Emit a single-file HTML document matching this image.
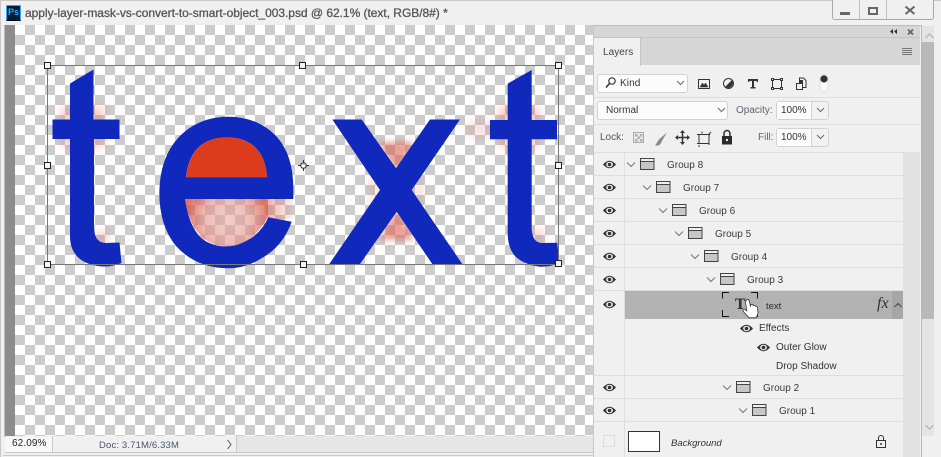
<!DOCTYPE html>
<html><head><meta charset="utf-8">
<style>
html,body{margin:0;padding:0;width:941px;height:457px;overflow:hidden;background:#f0f0f0;font-family:"Liberation Sans",sans-serif;color:#333}
svg{position:absolute;left:0;top:0}
.t{position:absolute;font-size:10px;line-height:12px;white-space:nowrap;color:#3a3a3a;margin-top:1px}
.b{position:absolute;box-sizing:border-box}
</style></head><body>
<div class="b" style="left:0;top:0;width:941px;height:1px;background:#c8c8c8"></div>
<div class="b" style="left:0;top:0;width:1px;height:457px;background:#c8c8c8"></div>
<div class="b" style="left:4px;top:25px;width:1px;height:412px;background:#bdbdbd"></div>
<div class="b" style="left:5px;top:25px;width:10px;height:411px;background:#8c8c8c"></div>
<div class="b" style="left:15px;top:25px;width:578px;height:411px;background-color:#fff;background-image:linear-gradient(45deg,#ccc 25%,transparent 25%,transparent 75%,#ccc 75%),linear-gradient(45deg,#ccc 25%,transparent 25%,transparent 75%,#ccc 75%);background-size:20px 20px;background-position:0 0,10px 10px"></div>
<div class="b" style="left:237px;top:436px;width:356px;height:16px;background:#e6e6e6"></div>

<svg width="941" height="457" viewBox="0 0 941 457">
<defs>
<filter id="bl" x="-60%" y="-60%" width="220%" height="220%"><feGaussianBlur stdDeviation="5"/></filter>
<filter id="bs" x="-60%" y="-60%" width="220%" height="220%"><feGaussianBlur stdDeviation="3"/></filter>
<radialGradient id="rg" gradientUnits="userSpaceOnUse" cx="228" cy="220" r="42">
<stop offset="0" stop-color="#e8a8a0" stop-opacity=".55"/><stop offset=".55" stop-color="#e39088" stop-opacity=".6"/><stop offset="1" stop-color="#d8503c" stop-opacity=".78"/></radialGradient>
<linearGradient id="lg" x1="0" x2="1"><stop offset="0" stop-color="#e06a5a" stop-opacity=".5"/><stop offset="1" stop-color="#e06a5a" stop-opacity=".08"/></linearGradient>
<g id="eye"><path d="M-6.500 0Q0-7.500 6.500 0Q0 7.500-6.500 0Z" fill="#333"/><ellipse cx="0" cy="0" rx="3.400" ry="2.800" fill="#eee"/><circle r="1.800" fill="#333"/></g>
<g id="grp" fill="none"><path d="M0 5.500l4 4 4-4" stroke="#777" stroke-width="1"/>
<path d="M13.500 1.500h13.500v11h-13.500z" fill="#c6c6c6" stroke="#444"/><path d="M13.500 4.500h13.500" stroke="#444"/><rect x="14" y="2" width="12.500" height="2" fill="#f0f0f0"/></g>
<g id="ch"><path d="M0 0l3.500 3.500 3.500-3.500" fill="none" stroke="#666"/></g>
</defs>

<!-- glow -->
<g filter="url(#bl)" fill="#e2685a" opacity=".36">
<rect x="62" y="107" width="42" height="40"/><rect x="94" y="232" width="14" height="12"/>
<rect x="499" y="107" width="40" height="40"/><rect x="531" y="230" width="12" height="12"/>
<rect x="468" y="122" width="30" height="14" opacity=".6"/>
</g>
<g filter="url(#bs)" fill="#db5c4c">
<path d="M378 142H414L396 172Z" opacity=".58"/><path d="M380 240H414L396 208Z" opacity=".58"/>
<path d="M368 172L382 190 368 210Z" opacity=".16"/><path d="M424 172L410 190 424 210Z" opacity=".16"/>
</g>
<path d="M185 199H268V217Q250 247 228 247Q192 245 185 199Z" fill="url(#rg)"/>
<rect x="268" y="199" width="25" height="20" fill="url(#lg)"/>
<path d="M186 177.500Q190 138 227 137Q264 138 267.500 177.500Z" fill="#dc3c1c" stroke="#e47a62" stroke-width=".7"/>

<!-- letters -->
<g fill="#1029bc">
<path d="M70 83.500L93.500 69.500V119.500H119.500V139H94V229Q95 243 106 243L119.500 242.500L121.500 263Q112 267 102 266.500Q84 265 76 255Q70 248 70 236V139H52.500V119.500H70Z"/>
<path d="M507.700 83.500L531.700 70V120H557V139.300H531.700V230Q533 243 542 243L557.300 242.700L559.300 263.300Q550 267 540 266.700Q524 265 515 256Q507.700 248 507.700 233V139.300H490V120H507.700Z"/>
<path d="M332.300 119.500H361.700L396 168.300L430 119.500H460L411.700 190L462.300 264H432.300L396.700 211.700L360 264H329.300L380 190Z"/>
<path fill-rule="evenodd" d="M293.300 199H185Q190 233 207 242Q228 252 248 240Q262 232 268.300 217.300L291.700 221.700Q283 246 262 258Q246 268.300 228 268.300Q196 268 176 246Q159.300 226 159.300 192Q160 158 178 138Q198 116.700 228 116.700Q258 116.700 277 137Q294 156 293.300 192ZM186 177.300H267.300Q264 138 227 137.300Q190 138 186 177.300Z"/>
</g>

<!-- selection -->
<rect x="47.500" y="65.500" width="511" height="199" fill="none" stroke="#777"/>
<g fill="#f4f4f4" stroke="#222">
<rect x="44.500" y="62.500" width="6" height="6"/><rect x="299.500" y="62.500" width="6" height="6"/><rect x="555.500" y="62.500" width="6" height="6"/>
<rect x="44.500" y="162.500" width="6" height="6"/><rect x="555.500" y="162.500" width="6" height="6"/>
<rect x="44.500" y="261.500" width="6" height="6"/><rect x="300.500" y="261.500" width="6" height="6"/><rect x="555.500" y="260.500" width="6" height="6"/>
</g>
<g fill="none" stroke="#333"><circle cx="303.500" cy="165.500" r="2.800"/><path d="M303.500 160v3M303.500 168v3M298 165.500h3M306 165.500h3"/></g>
</svg>

<!-- title -->
<div class="b" style="left:6px;top:5px;width:15px;height:16px;background:#001e36;border:1px solid #31a8ff;border-bottom-color:#000;color:#31a8ff;font-size:9px;line-height:13px;text-align:center;font-weight:bold">Ps</div>
<div class="t" style="left:25px;top:4px;font-size:12px;line-height:16px;color:#555;-webkit-text-stroke:.3px #555;letter-spacing:-.03px">apply-layer-mask-vs-convert-to-smart-object_003.psd @ 62.1% (text, RGB/8#) *</div>
<div class="b" style="left:832px;top:0;width:102px;height:20px;background:#f0f0f0;border:1px solid #a8a8a8;border-top:0;border-radius:0 0 3px 3px"></div>
<div class="b" style="left:859px;top:0;width:1px;height:19px;background:#c0c0c0"></div>
<div class="b" style="left:886px;top:0;width:1px;height:19px;background:#c0c0c0"></div>
<div class="b" style="left:840px;top:12px;width:10px;height:3px;background:#666"></div>
<div class="b" style="left:868px;top:7px;width:10px;height:8px;border:2px solid #666"></div>

<!-- status -->
<div class="b" style="left:5px;top:437px;width:47px;height:15px;background:#f8f8f8"></div>
<div class="t" style="left:12px;top:437px;color:#222;letter-spacing:.1px">62.09%</div>
<div class="b" style="left:52px;top:436px;width:185px;height:16px;background:#f0f0f0;border-left:1px solid #c8c8c8;border-right:1px solid #c8c8c8"></div>
<div class="t" style="left:99px;top:439px;font-size:9.500px;color:#4a5568;letter-spacing:.15px">Doc: 3.71M/6.33M</div>
<div class="b" style="left:5px;top:452px;width:588px;height:1px;background:#c8c8c8"></div>
<div class="b" style="left:3px;top:455px;width:590px;height:1px;background:#c8c8c8"></div>

<!-- panel -->
<div class="b" style="left:593px;top:25px;width:329px;height:432px;background:#f0f0f0;border-left:1px solid #c8c8c8;border-right:1px solid #b8b8b8;border-top:1px solid #bdbdbd"></div>
<div class="b" style="left:594px;top:26px;width:326px;height:12px;background:#d6d6d6;border-bottom:1px solid #c4c4c4"></div>
<div class="b" style="left:594px;top:38px;width:326px;height:27px;background:#d6d6d6"></div>
<div class="b" style="left:594px;top:38px;width:47px;height:28px;background:#f0f0f0;border-right:1px solid #c4c4c4"></div>
<div class="t" style="left:603px;top:46px;color:#444;letter-spacing:.05px;font-size:10px">Layers</div>
<div class="b" style="left:594px;top:97px;width:326px;height:1px;background:#dedede"></div>
<div class="b" style="left:594px;top:124px;width:326px;height:1px;background:#dedede"></div>
<div class="b" style="left:594px;top:152px;width:326px;height:1px;background:#dedede"></div>

<!-- controls -->
<div class="b" style="left:597px;top:74px;width:91px;height:19px;background:#fcfcfc;border:1px solid #d2d2d2;border-radius:3px"></div>
<div class="t" style="left:620px;top:77px;color:#333;letter-spacing:.1px">Kind</div>
<div class="b" style="left:597px;top:101px;width:131px;height:19px;background:#fcfcfc;border:1px solid #d2d2d2;border-radius:3px"></div>
<div class="t" style="left:606px;top:104px;color:#333">Normal</div>
<div class="t" style="left:736px;top:104px;color:#5b6472">Opacity:</div>
<div class="b" style="left:776px;top:101px;width:53px;height:19px;background:#f2f2f2;border:1px solid #d2d2d2;border-radius:3px"></div>
<div class="b" style="left:777px;top:102px;width:35px;height:17px;background:#fcfcfc;border-right:1px solid #d2d2d2"></div>
<div class="t" style="left:781px;top:104px;color:#333">100%</div>
<div class="t" style="left:600px;top:131px;color:#555">Lock:</div>
<div class="t" style="left:758px;top:131px;color:#5b6472">Fill:</div>
<div class="b" style="left:776px;top:128px;width:53px;height:19px;background:#f2f2f2;border:1px solid #d2d2d2;border-radius:3px"></div>
<div class="b" style="left:777px;top:129px;width:35px;height:17px;background:#fcfcfc;border-right:1px solid #d2d2d2"></div>
<div class="t" style="left:781px;top:131px;color:#333">100%</div>

<!-- rows -->
<div class="b" style="left:594px;top:153px;width:309px;height:304px;background:#f0f0f0"></div>
<div class="b" style="left:903px;top:153px;width:17px;height:304px;background:#e2e2e2"></div>
<div class="b" style="left:624px;top:153px;width:1px;height:304px;background:#dedede"></div>
<div class="b" style="left:594px;top:175px;width:309px;height:1px;background:#dedede"></div>
<div class="b" style="left:594px;top:198px;width:309px;height:1px;background:#dedede"></div>
<div class="b" style="left:594px;top:221px;width:309px;height:1px;background:#dedede"></div>
<div class="b" style="left:594px;top:244px;width:309px;height:1px;background:#dedede"></div>
<div class="b" style="left:594px;top:267px;width:309px;height:1px;background:#dedede"></div>
<div class="b" style="left:594px;top:290px;width:309px;height:1px;background:#dedede"></div>
<div class="b" style="left:594px;top:375px;width:309px;height:1px;background:#dedede"></div>
<div class="b" style="left:594px;top:398px;width:309px;height:1px;background:#dedede"></div>
<div class="b" style="left:594px;top:421px;width:309px;height:1px;background:#dedede"></div>
<div class="b" style="left:625px;top:291px;width:278px;height:28px;background:#b2b2b2"></div>
<div class="b" style="left:892px;top:291px;width:11px;height:28px;background:#a6a6a6"></div>

<div class="t" style="left:667px;top:159px">Group 8</div>
<div class="t" style="left:683px;top:182px">Group 7</div>
<div class="t" style="left:699px;top:205px">Group 6</div>
<div class="t" style="left:715px;top:228px">Group 5</div>
<div class="t" style="left:731px;top:251px">Group 4</div>
<div class="t" style="left:747px;top:274px">Group 3</div>
<div class="t" style="left:766px;top:300px;font-size:9.500px;color:#2c2c2c">text</div>
<div class="t" style="left:877px;top:297px;font-family:'Liberation Serif',serif;font-style:italic;font-size:16px;color:#333">fx</div>
<div class="t" style="left:759px;top:322px;color:#333">Effects</div>
<div class="t" style="left:776px;top:341px;color:#333">Outer Glow</div>
<div class="t" style="left:776px;top:360px;color:#333">Drop Shadow</div>
<div class="t" style="left:763px;top:382px">Group 2</div>
<div class="t" style="left:779px;top:405px">Group 1</div>
<div class="t" style="left:671px;top:437px;font-style:italic;font-size:9.500px;color:#333">Background</div>
<div class="b" style="left:603px;top:435px;width:12px;height:12px;border:1px solid #dcdcdc"></div>
<div class="b" style="left:628px;top:431px;width:32px;height:21px;background:#fff;border:1px solid #333"></div>
<div class="t" style="left:735px;top:296px;font-family:'DejaVu Serif',serif;font-weight:bold;font-size:14px;line-height:16px;color:#333">T</div>

<!-- scrollbar -->
<div class="b" style="left:922px;top:26px;width:12px;height:410px;background:#e4e4e4"></div>
<div class="b" style="left:922px;top:42px;width:12px;height:277px;background:#b9b9b9"></div>

<svg width="941" height="457" viewBox="0 0 941 457">
<!-- window X -->
<path d="M905.500 6.500l9 7.500m0-7.500l-9 7.500" stroke="#666" stroke-width="2" fill="none"/>
<!-- dock -->
<path d="M893 29l-3 2.500 3 2.500zM897 29l-3 2.500 3 2.500z" fill="#333"/>
<path d="M908 29.500l5 5m0-5l-5 5" stroke="#666" stroke-width="1.800"/>
<path d="M902 48.500h10M902 50.500h10M902 52.500h10M902 54.500h10" stroke="#777" stroke-width="1"/>
<!-- scroll chevrons -->
<path d="M925.500 38l4-4 4 4" fill="none" stroke="#aaa"/>
<path d="M925.500 425l4 4 4-4" fill="none" stroke="#aaa"/>
<!-- search -->
<circle cx="612" cy="81" r="3.200" fill="none" stroke="#333" stroke-width="1.200"/><path d="M609.500 83.500l-3.500 4" stroke="#333" stroke-width="1.600"/>
<use href="#ch" x="677" y="81"/><use href="#ch" x="718" y="108"/><use href="#ch" x="817" y="108"/><use href="#ch" x="817" y="135"/>
<!-- filter icons -->
<rect x="698.500" y="79.500" width="11" height="9" fill="#f0f0f0" stroke="#333"/><path d="M700 87l2.500-4 1.500 2 1.500-2 2.500 4z" fill="#333" stroke="#333" stroke-width=".5"/>
<circle cx="728.500" cy="83.500" r="5" fill="#f0f0f0" stroke="#333"/><path d="M732 80a5 5 0 0 1-7 7z" fill="#333"/>
<path d="M748 79h10v3h-1l-.5-1H754v6h1.500v1.500h-5V87H752v-6h-2.500l-.5 1h-1z" fill="#333"/>
<rect x="772.500" y="79.500" width="9" height="9" fill="none" stroke="#333"/>
<g fill="#f0f0f0" stroke="#333"><rect x="771.500" y="78.500" width="2" height="2"/><rect x="780.500" y="78.500" width="2" height="2"/><rect x="771.500" y="87.500" width="2" height="2"/><rect x="780.500" y="87.500" width="2" height="2"/></g>
<path d="M799.500 83v-5h4l2.500 2.500v7h-3" fill="none" stroke="#333"/><rect x="796.500" y="83.500" width="6" height="6" fill="#f0f0f0" stroke="#333"/><rect x="800" y="80" width="3" height="3" fill="#333"/>
<rect x="820" y="75" width="8" height="17" rx="4" fill="#fafafa" stroke="#dcdcdc"/><circle cx="824" cy="79" r="3.600" fill="#333"/>
<!-- lock icons -->
<rect x="633.500" y="132.500" width="10" height="10" fill="#e8e8e8" stroke="#aaa"/><path d="M635 134h2.500v2.500H635zM640 134h2.500v2.500H640zM637.500 136.500H640V139h-2.500zM635 139h2.500v2.500H635zM640 139h2.500v2.500H640z" fill="#b0b0b0"/>
<path d="M667 132.500l-6.500 5.500-2 2c-1 1.500-1.500 3-3.500 5.500 3.500 .5 5.500-.5 6.500-3.500l1-2z" fill="#8a8a8a"/>
<path d="M682.500 131.500v12M676 137.500h13" stroke="#333" stroke-width="1.500"/><path d="M682.500 130l-2.500 3h5zM682.500 145l-2.500-3h5zM675 137.500l3-2.500v5zM690 137.500l-3-2.500v5z" fill="#333"/>
<path d="M699 134.500h11l-1 .5v8.500h-10z" fill="none" stroke="#333"/><path d="M702 131.500v2M697 134.500h2M697 143.500h2M699 145v2M709 145v-2M711 132l-2 2" stroke="#333" fill="none"/>
<rect x="722" y="136" width="10" height="8.500" fill="#2c2c2c"/><path d="M724 136v-2.500a3 3 0 0 1 6 0v2.500" fill="none" stroke="#2c2c2c" stroke-width="1.500"/><circle cx="727" cy="140" r="1.200" fill="#eee"/>
<!-- eyes -->
<use href="#eye" x="609.500" y="164.500"/><use href="#eye" x="609.500" y="187.500"/><use href="#eye" x="609.500" y="210.500"/><use href="#eye" x="609.500" y="233.500"/><use href="#eye" x="609.500" y="256.500"/><use href="#eye" x="609.500" y="279.500"/><use href="#eye" x="609.500" y="304.500"/><use href="#eye" x="609.500" y="387.500"/><use href="#eye" x="609.500" y="410.500"/>
<use href="#eye" x="746.500" y="328.500"/><use href="#eye" x="763.500" y="347.500"/>
<!-- groups -->
<use href="#grp" x="627" y="157"/><use href="#grp" x="643" y="180"/><use href="#grp" x="659" y="203"/><use href="#grp" x="675" y="226"/><use href="#grp" x="691" y="249"/><use href="#grp" x="707" y="272"/><use href="#grp" x="723" y="380"/><use href="#grp" x="739" y="403"/>
<!-- thumb brackets -->
<path d="M729 292.500h-6.500v6M722.500 310v6.500h6.500M751 292.500h6.500v6M757.500 310v6.500H751" fill="none" stroke="#111" stroke-width="1"/>
<!-- hand -->
<path d="M746.500 300c1-1 2.500-.5 2.800 1l1.200 5 .5-1.500c1.500-.5 2 .2 2.200 1 1-.5 2 0 2.200.8 1-.3 1.800.2 2 1l.6 5c0 2-1 4-2 5.500h-7c-1.500-2-4-4-6-7-.5-1 .5-2 1.800-1.500l1.900 1.500-1-7c-.2-1.500 0-3 .8-3.800z" fill="#fff" stroke="#333" stroke-width=".8"/>
<path d="M894.500 307l3.500-3.500 3.500 3.500" fill="none" stroke="#444"/>
<!-- bg lock -->
<rect x="876.500" y="440.500" width="9" height="7" fill="#f0f0f0" stroke="#333"/><path d="M878.500 440v-2a2.500 2.500 0 0 1 5 0v2" fill="none" stroke="#333"/><circle cx="881" cy="444" r="1" fill="#333"/>
<!-- status chevron -->
<path d="M227.500 440l3.500 4.500-3.500 4.500" fill="none" stroke="#555"/>
</svg>
</body></html>
